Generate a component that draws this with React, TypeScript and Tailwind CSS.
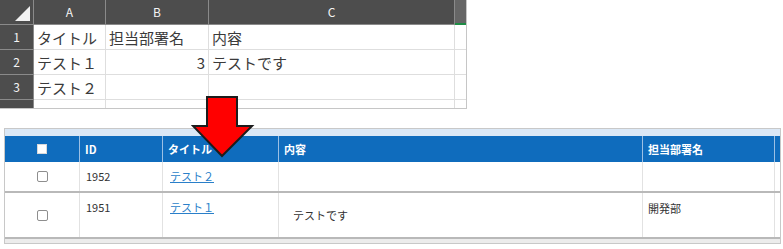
const jp = "font-['Noto_Sans_CJK_JP','Noto_Sans',sans-serif]";

const excelCols = ['A', 'B', 'C'];
const excelWidths = ['w-[72px]', 'w-[103px]', 'w-[246px]'];

const excelRows: { n: string; cells: { text: string; right?: boolean }[] }[] = [
  { n: '1', cells: [{ text: 'タイトル' }, { text: '担当部署名' }, { text: '内容' }] },
  { n: '2', cells: [{ text: 'テスト１' }, { text: '3', right: true }, { text: 'テストです' }] },
  { n: '3', cells: [{ text: 'テスト２' }, { text: '' }, { text: '' }] },
];

function Sheet() {
  return (
    <div className={`w-[467px] border-r border-b border-[#c6c6c6] bg-white ${jp}`}>
      <div className="flex h-[25px] bg-[#4d4d4d]">
        <div className="relative w-[34px] border-r border-b border-[#8a8a8a]">
          <div className="absolute right-[3px] bottom-[3px] h-0 w-0 border-l-[15px] border-l-transparent [border-bottom:15px_solid_#f2f2f2]" />
        </div>
        {excelCols.map((c, i) => (
          <div
            key={c}
            className={`${excelWidths[i]} flex items-center justify-center border-r border-b border-[#8a8a8a] text-[12px] text-[#f4f4f4]`}
          >
            {c}
          </div>
        ))}
        <div className="w-[11px] border-b-2 border-b-[#1e8c45] bg-[#666]" />
      </div>
      {excelRows.map((r) => (
        <div key={r.n} className="flex h-[25px]">
          <div className="flex w-[34px] items-center justify-center border-r border-b border-[#8a8a8a] bg-[#4d4d4d] text-[12px] text-[#f4f4f4]">
            {r.n}
          </div>
          {r.cells.map((c, i) => (
            <div
              key={i}
              className={`${excelWidths[i]} flex items-center border-r border-b border-[#dedede] px-[3px] text-[15px] leading-none text-[#3a3a3a] ${c.right ? 'justify-end' : ''}`}
            >
              {c.text}
            </div>
          ))}
          <div className="w-[11px] border-b border-[#dedede]" />
        </div>
      ))}
      <div className="flex h-[8px]">
        <div className="w-[34px] border-r border-[#8a8a8a] bg-[#4d4d4d]" />
        {excelWidths.map((w, i) => (
          <div key={i} className={`${w} border-r border-[#dedede]`} />
        ))}
        <div className="w-[11px]" />
      </div>
    </div>
  );
}

function Box({ header }: { header?: boolean }) {
  if (header) return <div className="h-[10px] w-[10px] border border-[#d9d9d9] bg-white" />;
  return <div className="h-[11px] w-[11px] rounded-[2px] border border-[#8e8e8e] bg-white" />;
}

const cellW = ['w-[75px]', 'w-[83px]', 'w-[116px]', 'w-[364px]', 'w-[132px]'];

function DataTable() {
  return (
    <div className={`ml-[4px] mt-[19px] w-[777px] border border-[#c8c8c8] bg-white ${jp} text-[11px] text-[#333]`}>
      <div className="h-[7px] bg-[#dbe8f6]" />
      <div className="flex h-[26px] bg-[#0f6cbd] font-semibold text-white">
        <div className={`${cellW[0]} flex items-center justify-center border-r border-[#9cc0e4]`}>
          <Box header />
        </div>
        <div className={`${cellW[1]} flex items-center border-r border-[#9cc0e4] pl-[5px]`}>ID</div>
        <div className={`${cellW[2]} flex items-center border-r border-[#9cc0e4] pl-[5px]`}>タイトル</div>
        <div className={`${cellW[3]} flex items-center border-r border-[#9cc0e4] pl-[5px]`}>内容</div>
        <div className={`${cellW[4]} flex items-center border-r border-[#9cc0e4] pl-[5px]`}>担当部署名</div>
        <div className="flex-1" />
      </div>
      <div className="flex h-[31px] border-b-2 border-[#b9b9b9]">
        <div className={`${cellW[0]} flex items-center justify-center border-r border-[#e2e2e2]`}>
          <Box />
        </div>
        <div className={`${cellW[1]} flex items-center border-r border-[#e2e2e2] pl-[6px]`}>1952</div>
        <div className={`${cellW[2]} flex items-center border-r border-[#e2e2e2] pl-[7px]`}>
          <span className="text-[#2a7fc9] underline">テスト２</span>
        </div>
        <div className={`${cellW[3]} border-r border-[#e2e2e2]`} />
        <div className={`${cellW[4]} border-r border-[#e2e2e2]`} />
        <div className="flex-1" />
      </div>
      <div className="flex h-[46px] border-b-2 border-[#b9b9b9]">
        <div className={`${cellW[0]} flex items-center justify-center border-r border-[#e2e2e2]`}>
          <Box />
        </div>
        <div className={`${cellW[1]} border-r border-[#e2e2e2] pl-[6px] pt-[6px]`}>1951</div>
        <div className={`${cellW[2]} border-r border-[#e2e2e2] pl-[7px] pt-[6px]`}>
          <span className="text-[#2a7fc9] underline">テスト１</span>
        </div>
        <div className={`${cellW[3]} flex items-center border-r border-[#e2e2e2] pl-[14px]`}>テストです</div>
        <div className={`${cellW[4]} border-r border-[#e2e2e2] pl-[5px] pt-[7px]`}>開発部</div>
        <div className="flex-1" />
      </div>
      <div className="h-[4px] bg-[#ececec]" />
    </div>
  );
}

function Arrow() {
  return (
    <svg className="absolute left-[191px] top-[95px]" width="64" height="64" viewBox="0 0 64 64">
      <polygon
        points="16,2 46,2 46,31 61,31 31,61 2,31 16,31"
        fill="#ff0000"
        stroke="#1c1c1c"
        strokeWidth="2"
        strokeLinejoin="miter"
      />
    </svg>
  );
}

export default function App() {
  return (
    <div className="relative h-[249px] w-[783px] overflow-hidden bg-white">
      <Sheet />
      <DataTable />
      <Arrow />
    </div>
  );
}
